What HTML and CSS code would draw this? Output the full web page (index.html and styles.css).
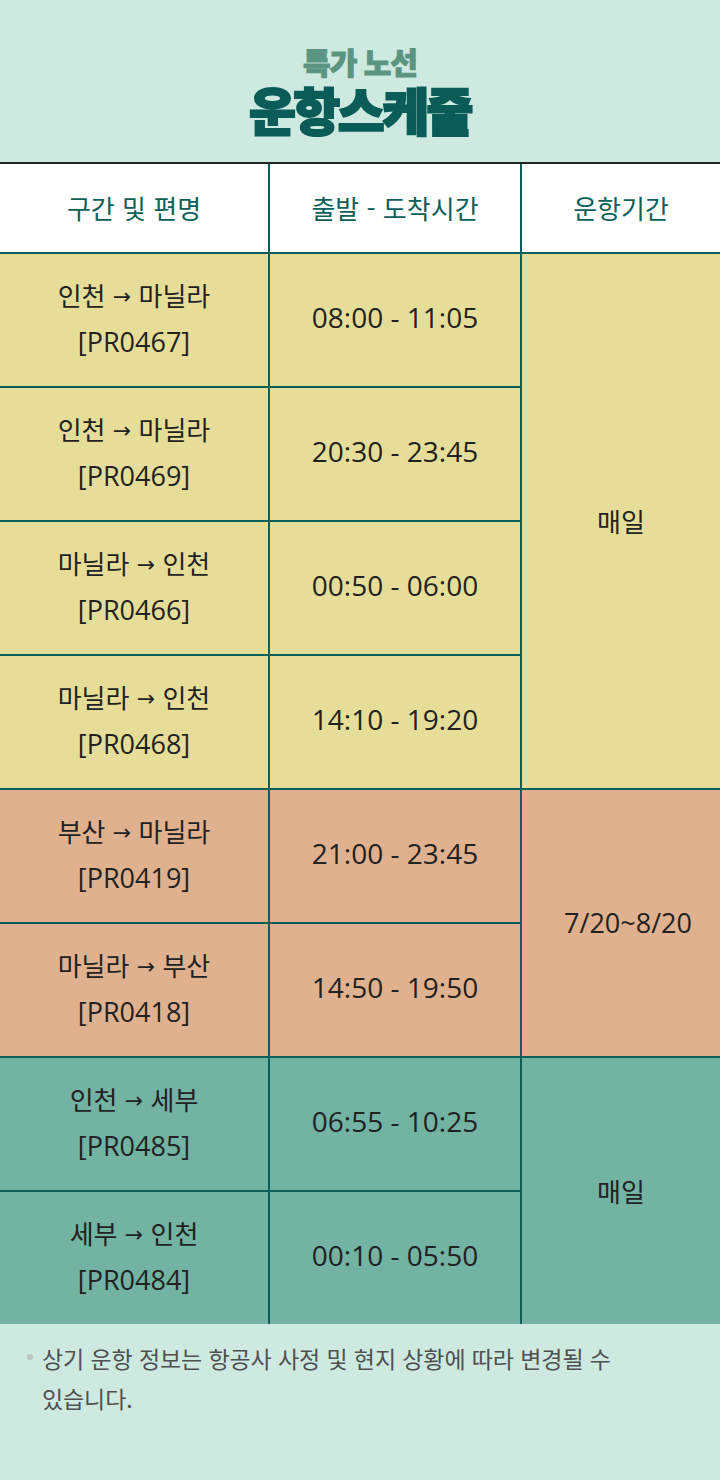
FILE: index.html
```html
<!DOCTYPE html>
<html lang="ko">
<head>
<meta charset="utf-8">
<title>특가 노선 운항스케줄</title>
<link rel="stylesheet" href="styles.css">
</head>
<body>
<div class="page">
  <header class="hero">
    <div class="hero-sub">특가 노선</div>
    <h1 class="hero-title">운항스케줄</h1>
  </header>

  <div class="schedule">
    <div class="cell head"><p class="txt">구간 및 편명</p></div>
    <div class="cell head"><p class="txt">출발 - 도착시간</p></div>
    <div class="cell head"><p class="txt">운항기간</p></div>

    <div class="cell yellow route"><p class="txt">인천 <span class="arrow">→</span> 마닐라<br><span class="code">[PR0467]</span></p></div>
    <div class="cell yellow time"><p class="txt">08:00 - 11:05</p></div>
    <div class="cell yellow period span4"><p class="txt">매일</p></div>

    <div class="cell yellow route"><p class="txt">인천 <span class="arrow">→</span> 마닐라<br><span class="code">[PR0469]</span></p></div>
    <div class="cell yellow time"><p class="txt">20:30 - 23:45</p></div>

    <div class="cell yellow route"><p class="txt">마닐라 <span class="arrow">→</span> 인천<br><span class="code">[PR0466]</span></p></div>
    <div class="cell yellow time"><p class="txt">00:50 - 06:00</p></div>

    <div class="cell yellow route"><p class="txt">마닐라 <span class="arrow">→</span> 인천<br><span class="code">[PR0468]</span></p></div>
    <div class="cell yellow time"><p class="txt">14:10 - 19:20</p></div>

    <div class="cell orange route"><p class="txt">부산 <span class="arrow">→</span> 마닐라<br><span class="code">[PR0419]</span></p></div>
    <div class="cell orange time"><p class="txt">21:00 - 23:45</p></div>
    <div class="cell orange period span2"><p class="txt code">7/20~8/20</p></div>

    <div class="cell orange route"><p class="txt">마닐라 <span class="arrow">→</span> 부산<br><span class="code">[PR0418]</span></p></div>
    <div class="cell orange time"><p class="txt">14:50 - 19:50</p></div>

    <div class="cell teal route"><p class="txt">인천 <span class="arrow">→</span> 세부<br><span class="code">[PR0485]</span></p></div>
    <div class="cell teal time"><p class="txt">06:55 - 10:25</p></div>
    <div class="cell teal period span2"><p class="txt">매일</p></div>

    <div class="cell teal route"><p class="txt">세부 <span class="arrow">→</span> 인천<br><span class="code">[PR0484]</span></p></div>
    <div class="cell teal time"><p class="txt">00:10 - 05:50</p></div>
  </div>

  <ul class="notes">
    <li class="note">상기 운항 정보는 항공사 사정 및 현지 상황에 따라 변경될 수 있습니다.</li>
  </ul>
</div>
</body>
</html>
```

FILE: styles.css
```css
* { box-sizing: border-box; }

html, body {
  margin: 0;
  padding: 0;
  background: #cde9e0;
}

body {
  font-family: "Noto Sans CJK KR", "Noto Sans", sans-serif;
  color: #222;
}

.page {
  width: 720px;
  min-height: 1480px;
  background: #cde9e0;
}

.hero {
  height: 162px;
  padding-top: 46px;
  display: flex;
  flex-direction: column;
  align-items: center;
}

.hero-sub {
  font-size: 30px;
  line-height: 30px;
  font-weight: 900;
  color: #5b9481;
  letter-spacing: -1px;
  -webkit-text-stroke: 1px #5b9481;
}

.hero-title {
  margin: 8px 0 0;
  font-size: 51px;
  line-height: 50px;
  font-weight: 900;
  color: #0a5c58;
  letter-spacing: -2.5px;
  -webkit-text-stroke: 2px #0a5c58;
}

.schedule {
  display: grid;
  grid-template-columns: 268px 250px 198px;
  grid-template-rows: 88px repeat(8, 132px);
  gap: 2px;
  background: #0c5e5a;
  border-top: 2px solid #1e2624;
}

.cell {
  display: flex;
  align-items: center;
  justify-content: center;
  text-align: center;
  font-size: 26px;
  line-height: 44px;
  color: #222;
}

.txt {
  margin: 0;
}

.route {
  padding-bottom: 4px;
}

.time, .code {
  font-family: "Open Sans", "Noto Sans CJK KR", sans-serif;
}

.time {
  font-size: 28px;
  padding-bottom: 6px;
}

.code {
  font-size: 27px;
}

.period.span2 .code {
  padding-left: 14px;
}

.arrow {
  font-family: "DejaVu Sans", sans-serif;
  font-size: 22px;
  vertical-align: 2px;
}

.head {
  background: #fff;
  color: #0e5f5a;
}

.yellow { background: #e6de98; }
.orange { background: #dfb18e; }
.teal { background: #72b3a2; }

.span4 { grid-row: span 4; }
.span2 { grid-row: span 2; }

.notes {
  list-style: none;
  margin: 0;
  padding: 14px 0 0 42px;
}

.note {
  position: relative;
  max-width: 600px;
  font-size: 23px;
  line-height: 40px;
  color: #505050;
  letter-spacing: -0.1px;
  word-break: keep-all;
}

.note::before {
  content: "";
  position: absolute;
  left: -15px;
  top: 16px;
  width: 6px;
  height: 6px;
  border-radius: 50%;
  background: #b9c6c1;
}
```
